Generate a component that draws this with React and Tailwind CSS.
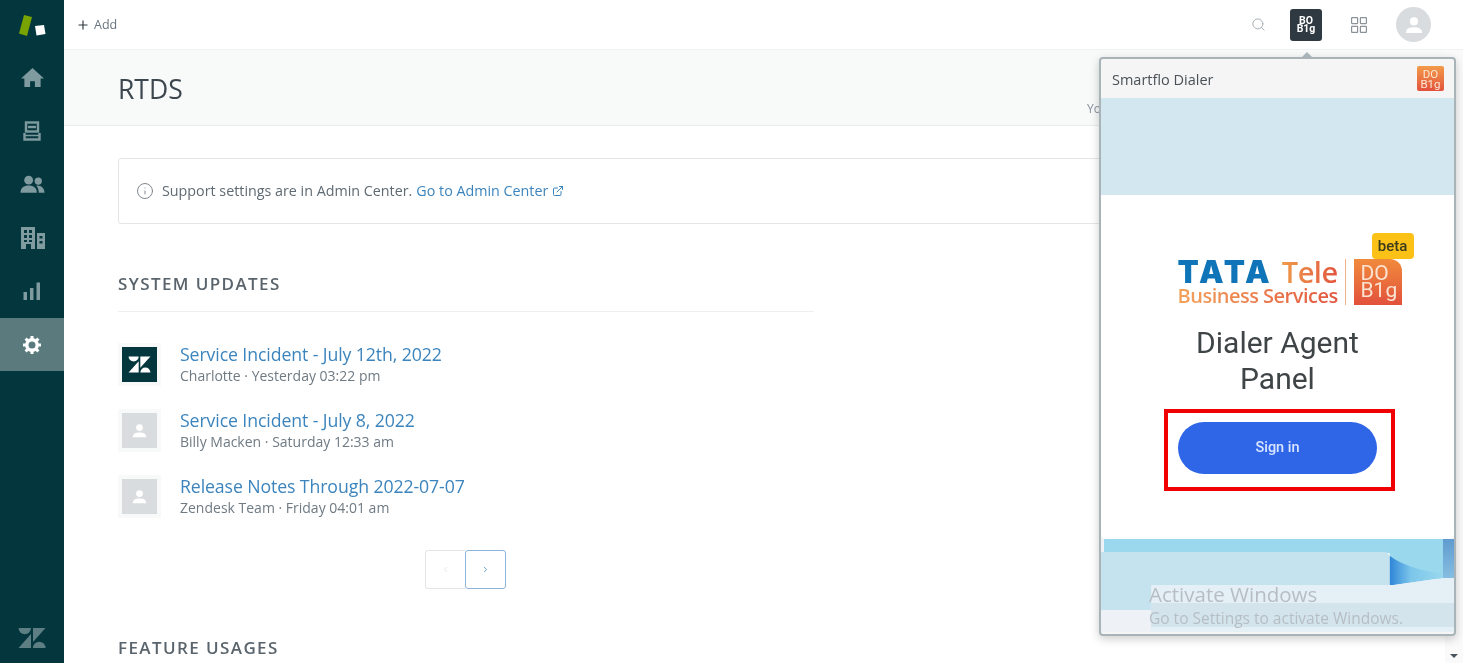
import React from "react";
import { Plus, Search, Info, ExternalLink, ChevronLeft, ChevronRight } from "lucide-react";

const body = "font-['Open_Sans','Noto_Sans',sans-serif]";

function ZendeskMark({ className }) {
  return (
    <svg viewBox="0 0 28 21" className={className} fill="currentColor">
      <path d="M0.5 0.5H13A6.25 6.25 0 0 1 0.5 0.5Z" />
      <path d="M13 6.5V20.5H0.5Z" />
      <path d="M15 0.5H27.5L15 14.5Z" />
      <path d="M15 20.5A6.25 6.25 0 0 1 27.5 20.5Z" />
    </svg>
  );
}

function HomeIcon() {
  return (
    <svg viewBox="0 0 26 22" className="w-[25px] h-[21px]" fill="currentColor">
      <path d="M13 1L1 12h3.5v9h6v-6h5v6h6v-9H25z" />
    </svg>
  );
}

function ViewsIcon() {
  return (
    <svg viewBox="0 0 18 20" className="w-[18px] h-[20px]" fill="none" stroke="currentColor" strokeWidth="2.4">
      <rect x="3" y="1.5" width="12" height="9" />
      <path d="M5 6h8" />
      <path d="M1.5 12v6.5h15V12" />
      <path d="M1.5 14.5h15" strokeWidth="1.5" />
    </svg>
  );
}

function PeopleIcon() {
  return (
    <svg viewBox="0 0 26 18" className="w-[25px] h-[18px]" fill="currentColor">
      <circle cx="9" cy="5" r="4.6" />
      <circle cx="19" cy="6" r="3.8" />
      <path d="M0.5 18c0-5 3.5-7.5 8.500-7.500s8.500 2.500 8.500 7.500z" />
      <path d="M17 10.500c4.500-.5 8.500 2.500 8.500 7.500h-6c0-3-1-5.500-2.500-7.500z" />
    </svg>
  );
}

function BuildingIcon() {
  return (
    <svg viewBox="0 0 25 23" className="w-[25px] h-[23px]" fill="currentColor" fillRule="evenodd">
      <path d="M1 1h14v22h-4v-5H6v5H1zM4 4v3h3V4zm5 0v3h3V4zM4 9v3h3V9zm5 0v3h3V9zM4 14v2h3v-2zm5 0v2h3v-2z" />
      <path d="M17 7h8v16h-8zm2.500 3v2.500h3V10zm0 5v2.500h3V15z" />
    </svg>
  );
}

function BarsIcon() {
  return (
    <svg viewBox="0 0 18 18" className="w-[18px] h-[18px]" fill="currentColor">
      <rect x="0.500" y="10" width="3.500" height="8" />
      <rect x="7" y="6" width="3.500" height="12" />
      <rect x="13.500" y="0.500" width="3.500" height="17.500" />
    </svg>
  );
}

function GearIcon() {
  return (
    <svg viewBox="0 0 20 20" className="w-[20px] h-[20px]" fill="none" stroke="currentColor">
      <circle cx="10" cy="10" r="5.200" strokeWidth="3.400" />
      <path
        strokeWidth="3"
        d="M10 1v3M10 16v3M1 10h3M16 10h3M3.600 3.600l2.200 2.200M14.200 14.200l2.200 2.200M16.400 3.600l-2.200 2.200M5.800 14.200l-2.200 2.200"
      />
    </svg>
  );
}

function PersonIcon({ className }) {
  return (
    <svg viewBox="0 0 20 20" className={className} fill="currentColor">
      <circle cx="10" cy="6" r="4.500" />
      <path d="M1 19c0-5 3.500-6.500 9-6.500s9 1.500 9 6.500z" />
    </svg>
  );
}

const navItems = [
  { icon: <HomeIcon /> },
  { icon: <ViewsIcon /> },
  { icon: <PeopleIcon /> },
  { icon: <BuildingIcon /> },
  { icon: <BarsIcon /> },
  { icon: <GearIcon />, active: true },
];

function Sidebar() {
  return (
    <aside className="w-[64px] shrink-0 bg-[#03363d] flex flex-col items-stretch text-[#7f9b9f]">
      <div className="h-[51px] flex items-center justify-center">
        <svg viewBox="0 0 28 22" className="w-[28px] h-[22px]">
          <path d="M6 0L14 2 9 21 1 18.500z" fill="#78a300" />
          <path d="M17 11L26 10 27.500 19 18.500 20.500z" fill="#ffffff" />
        </svg>
      </div>
      {navItems.map((item, i) => (
        <div
          key={i}
          className={
            item.active
              ? "h-[53.400px] flex items-center justify-center bg-[#5b7a7e] text-white"
              : "h-[53.400px] flex items-center justify-center"
          }
        >
          {item.icon}
        </div>
      ))}
      <div className="mt-auto h-[36px] flex items-start justify-center text-[#5d7f83]">
        <ZendeskMark className="w-[28px] h-[22px]" />
      </div>
    </aside>
  );
}

function TopBar() {
  return (
    <header className="h-[50px] shrink-0 bg-white flex items-center pl-[12px] pr-[32px] border-b border-[#f0f1f2]">
      <Plus size={14} className="text-[#2f3941]" strokeWidth={2} />
      <span className="ml-[4px] mt-[1px] text-[12.500px] text-[#68737d]">Add</span>
      <div className="ml-auto flex items-center">
        <Search size={15} className="text-[#a9b1b7]" strokeWidth={1.600} />
        <div className="ml-[24px] w-[32px] h-[32px] rounded-[3px] bg-[#2f3941] flex flex-col items-center justify-center text-white font-bold text-[10.500px] leading-[8px] font-['Roboto',sans-serif]">
          <span>BO</span>
          <span>B1g</span>
        </div>
        <svg viewBox="0 0 16 16" className="ml-[29px] w-[16px] h-[16px] text-[#8a9299]" fill="none" stroke="currentColor" strokeWidth="1.200">
          <rect x="0.600" y="0.600" width="6" height="6" rx="0.500" />
          <rect x="9.400" y="0.600" width="6" height="6" rx="0.500" />
          <rect x="0.600" y="9.400" width="6" height="6" rx="0.500" />
          <rect x="9.400" y="9.400" width="6" height="6" rx="0.500" />
        </svg>
        <div className="ml-[29px] w-[35px] h-[35px] rounded-full bg-[#d8dcde] flex items-center justify-center text-white">
          <PersonIcon className="w-[18px] h-[18px]" />
        </div>
      </div>
    </header>
  );
}

const updates = [
  { title: "Service Incident - July 12th, 2022", meta: "Charlotte · Yesterday 03:22 pm", brand: true },
  { title: "Service Incident - July 8, 2022", meta: "Billy Macken · Saturday 12:33 am" },
  { title: "Release Notes Through 2022-07-07", meta: "Zendesk Team · Friday 04:01 am" },
];

function UpdateRow({ title, meta, brand }) {
  return (
    <div className="flex items-center h-[42px]">
      <div className="w-[43px] h-[43px] shrink-0 bg-[#f8f9f9] flex items-center justify-center">
        {brand ? (
          <div className="w-[35px] h-[35px] bg-[#03363d] flex items-center justify-center text-white">
            <ZendeskMark className="w-[23px] h-[17px]" />
          </div>
        ) : (
          <div className="w-[35px] h-[35px] bg-[#d8dcde] flex items-center justify-center text-white">
            <PersonIcon className="w-[15px] h-[15px]" />
          </div>
        )}
      </div>
      <div className="ml-[19px]">
        <div className="text-[17.700px] leading-[24px] text-[#3b84bd] tracking-[-0.100px]">{title}</div>
        <div className="text-[14px] leading-[20px] text-[#6f7a83]">{meta}</div>
      </div>
    </div>
  );
}

function SectionTitle({ children }) {
  return <h2 className="text-[17px] leading-[22px] font-semibold tracking-[1.400px] text-[#5a646c] uppercase">{children}</h2>;
}

function Main() {
  return (
    <main className="flex-1 min-h-0 overflow-hidden bg-white">
      <div className="h-[76px] bg-[#f8f9f9] border-b border-[#e9ebed] flex items-center justify-between pl-[54px]">
        <h1 className="mt-[4px] text-[26.500px] text-[#3c464e]">RTDS</h1>
        <span className="mr-[362px] mt-[43px] text-[12px] text-[#87929d]">Yo</span>
      </div>
      <div className="pl-[54px]">
        <div className="mt-[32px] h-[66px] w-[1100px] border border-[#e3e6e8] rounded-[3px] flex items-center pl-[17px] text-[14.300px] text-[#5f6a73]">
          <Info size={18} strokeWidth={1.300} className="text-[#7d868e]" />
          <span className="ml-[8px]">Support settings are in Admin Center.</span>
          <span className="ml-[4px] text-[#3b84bd]">Go to Admin Center</span>
          <ExternalLink size={12} className="ml-[4px] text-[#3b84bd]" />
        </div>
        <div className="mt-[49px] w-[696px] border-b border-[#eceef0] pb-[16px]">
          <SectionTitle>System Updates</SectionTitle>
        </div>
        <div className="mt-[31px] flex flex-col gap-[24px]">
          {updates.map((u) => (
            <UpdateRow key={u.title} {...u} />
          ))}
        </div>
        <div className="mt-[33px] ml-[307px] flex h-[39px] w-[81px]">
          <div className="w-[40px] border border-r-0 border-[#e3e6e8] rounded-l-[3px] flex items-center justify-center text-[#d8dcde]">
            <ChevronLeft size={9} />
          </div>
          <div className="w-[41px] border border-[#8db4d8] rounded-[3px] flex items-center justify-center text-[#3b84bd]">
            <ChevronRight size={9} />
          </div>
        </div>
        <div className="mt-[48px]">
          <SectionTitle>Feature Usages</SectionTitle>
        </div>
      </div>
    </main>
  );
}

function TataLogo() {
  return (
    <div className="relative ml-[24px] flex items-stretch justify-center h-[46px] font-['Open_Sans',sans-serif]">
      <div className="w-[160px] flex flex-col items-start">
        <div className="flex items-baseline h-[25px] leading-[25px] whitespace-nowrap">
          <span className="font-['Inter',sans-serif] font-black text-[31px] tracking-[3px] text-[#0f75b8]">TATA</span>
          <span className="ml-[9px] text-[29px] font-semibold bg-linear-to-r from-[#ef9a4a] to-[#e2553f] bg-clip-text text-transparent tracking-[-0.500px]">Tele</span>
        </div>
        <div className="mt-[1px] text-[20px] leading-[22px] font-semibold bg-linear-to-r from-[#f2a25a] to-[#e2553f] bg-clip-text text-transparent tracking-[-0.500px] whitespace-nowrap">
          Business Services
        </div>
      </div>
      <div className="ml-[7px] mr-[8px] w-px bg-[#efb08a]" />
      <div className="w-[48px] rounded-tr-[12px] bg-linear-to-b from-[#f08a3c] to-[#e2503c] text-[#fbe3d2] text-[21px] leading-[17px] flex flex-col justify-center pl-[7px] font-['Roboto',sans-serif]">
        <span>DO</span>
        <span>B1g</span>
      </div>
      <span className="absolute right-[-12px] top-[-26px] w-[42px] h-[26px] rounded-[4px] bg-[#fbc116] text-[#3a3a1c] text-[15px] leading-[26px] text-center font-medium font-['Roboto',sans-serif]">
        beta
      </span>
    </div>
  );
}

function Wallpaper() {
  return (
    <svg viewBox="0 0 352 93" className="w-full h-[93px] block" preserveAspectRatio="none">
      <defs>
        <linearGradient id="wedge" x1="0" x2="1" y1="0" y2="0">
          <stop offset="0" stopColor="#2f86d8" />
          <stop offset="0.4" stopColor="#7cc6ea" />
          <stop offset="1" stopColor="#9ad8ee" />
        </linearGradient>
        <linearGradient id="edge" x1="0" x2="0" y1="0" y2="1">
          <stop offset="0" stopColor="#5f9bd0" />
          <stop offset="1" stopColor="#86bde0" />
        </linearGradient>
      </defs>
      <rect width="352" height="93" fill="#eef2f6" />
      <rect x="3" width="349" height="14" fill="#9bd8ee" />
      <rect x="288" width="64" height="40" fill="#9ad8ee" />
      <rect x="341" width="11" height="39" fill="url(#edge)" />
      <path d="M0 13h284l4 4v54H0z" fill="#c5e3ef" />
      <path d="M288 17c14 10 30 14 53 18v4l-49 7h-4z" fill="url(#wedge)" />
      <path d="M50 46h242l49-7h11v54H50z" fill="#e4eff6" />
      <path d="M50 64h302v24H50z" fill="#d3e4ed" />
    </svg>
  );
}

function DialerPopup() {
  return (
    <div className="absolute left-[1099px] top-[57px] w-[357px] h-[579px] border-[2px] border-[#a9b4b9] rounded-[4px] bg-[#f5f5f5] shadow-[0_3px_10px_rgba(0,0,0,0.2)] font-['Roboto',sans-serif]">
      <div className="absolute left-[200px] top-[-7px] w-0 h-0 border-x-[6px] border-x-transparent border-b-[6px] border-b-[#a9b4b9]" />
      <div className="h-[39px] flex items-center justify-between pl-[11px] pr-[10px]">
        <span className="mt-[3px] text-[14.500px] text-[#4a5055] font-['Open_Sans',sans-serif]">Smartflo Dialer</span>
        <div className="w-[27px] h-[25px] rounded-[2px] bg-linear-to-b from-[#f29a4a] to-[#e2503c] text-[#fde6d6] text-[11.500px] leading-[10px] text-center flex flex-col justify-center">
          <span>DO</span>
          <span>B1g</span>
        </div>
      </div>
      <div className="h-[97px] bg-[#d3e7f0]" />
      <div className="h-[344px] bg-white rounded-b-[6px] relative flex flex-col items-center pt-[64px]">
        <TataLogo />
        <div className="mt-[20px] text-[30px] leading-[36px] text-[#3f4447] text-center w-[200px]">Dialer Agent Panel</div>
        <div className="mt-[12px] ml-[4px] w-[231px] h-[82px] border-[4px] border-[#f00000] pl-[10px] pt-[9px]">
          <button className="w-[199px] h-[52px] rounded-full bg-[#2f66e8] text-[#d9e5ff] text-[14.500px] font-medium">Sign in</button>
        </div>
      </div>
      <Wallpaper />
      <div className="absolute left-[48px] top-[522px] text-[#b6bec4] font-['Open_Sans',sans-serif]">
        <div className="text-[20.500px] leading-[26px] whitespace-nowrap">Activate Windows</div>
        <div className="text-[15.500px] leading-[22px] whitespace-nowrap">Go to Settings to activate Windows.</div>
      </div>
    </div>
  );
}

export default function App() {
  return (
    <div className={`relative h-[663px] w-[1463px] overflow-hidden bg-white flex blur-[0.500px] ${body}`}>
      <Sidebar />
      <div className="flex-1 min-w-0 flex flex-col">
        <TopBar />
        <Main />
      </div>
      <div className="absolute right-0 top-[50px] bottom-0 w-[18px] bg-[#fafafa]">
        <div className="absolute bottom-[5px] left-[5px] w-0 h-0 border-x-[4px] border-x-transparent border-t-[4px] border-t-[#49545c]" />
      </div>
      <DialerPopup />
    </div>
  );
}
